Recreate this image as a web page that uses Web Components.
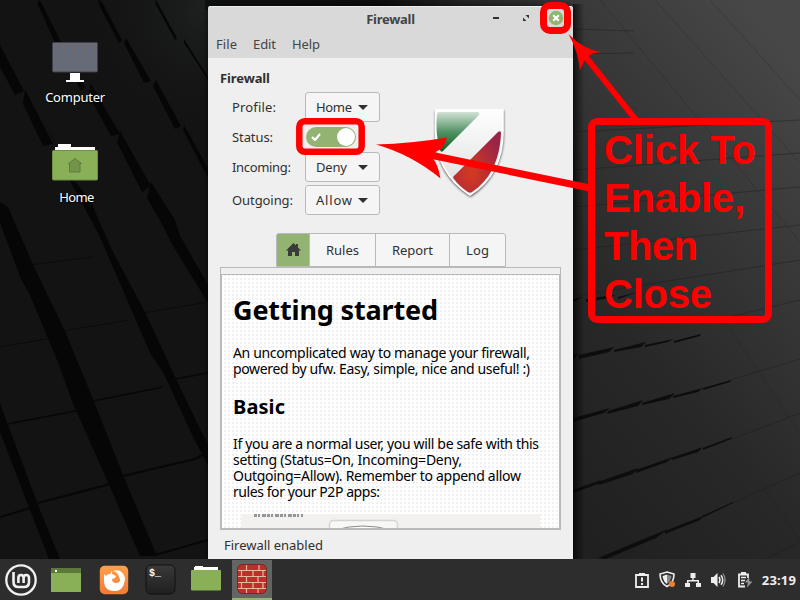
<!DOCTYPE html>
<html lang="en">
<head>
<meta charset="utf-8">
<title>Firewall</title>
<style>
html,body{margin:0;width:800px;height:600px;overflow:hidden;background:#151515;font-family:"Noto Sans","Open Sans",sans-serif}
</style>
</head>
<body>
<mint-desktop></mint-desktop>
<script>
function define(name, markup, setup) {
  const t = document.createElement('template');
  t.innerHTML = markup;
  customElements.define(name, class extends HTMLElement {
    connectedCallback() {
      if (this.shadowRoot) return;
      const r = this.attachShadow({ mode: 'open' });
      r.append(t.content.cloneNode(true));
      if (setup) setup.call(this, r);
    }
  });
}

/* A single line of text whose tracking is tuned to a given width. */
define('text-line', `<style>
:host{display:block;white-space:nowrap;line-height:16px}
span{display:inline-block}
</style><span><slot></slot></span>`, function (r) {
  const s = r.querySelector('span'), w = +this.getAttribute('w');
  if (w) {
    const n = this.textContent.length;
    s.style.letterSpacing = ((w - s.getBoundingClientRect().width) / (n - 1)) + 'px';
  }
});

define('wall-paper', `<style>:host{display:block;position:absolute;inset:0}svg{display:block}</style>
<svg width="800" height="600" viewBox="0 0 800 600">
<defs>
<linearGradient id="r" x1="0.75" y1="0" x2="0.3" y2="1"><stop offset="0" stop-color="#474747"/><stop offset=".3" stop-color="#383838"/><stop offset=".65" stop-color="#282828"/><stop offset="1" stop-color="#202020"/></linearGradient>
<linearGradient id="t" x1="0" x2="1"><stop offset="0" stop-color="#101211"/><stop offset=".45" stop-color="#0d0d0d"/><stop offset=".7" stop-color="#242424"/><stop offset="1" stop-color="#383838"/></linearGradient>
<linearGradient id="s" x1="0" x2="1"><stop offset="0" stop-color="#000" stop-opacity=".55"/><stop offset="1" stop-color="#000" stop-opacity="0"/></linearGradient>
<radialGradient id="c"><stop offset="0" stop-color="#1e2120"/><stop offset="1" stop-color="#131313" stop-opacity="0"/></radialGradient>
</defs>
<rect width="800" height="600" fill="#131313"/>
<ellipse cx="205" cy="10" rx="130" ry="130" fill="url(#c)"/>
<rect x="205" width="370" height="10" fill="url(#t)"/>
<rect x="570" width="230" height="600" fill="url(#r)"/>
<g fill="#060606">
<path d="M38 0l3 2 20 40-5 3-18-40zM59 42l26 45-4 4-24-46zM91 84l29 50-9 2-23-42zM120 131l31 55-9 6-25-50zM151 182l24 38 5 16 30 52v18l-37-60-10-20-16-28z"/>
<path d="M98 0l4 2 20 38-3 3-20-38zM126 38l25 43-7 2-20-40zM156 80l25 46-6 3-22-43zM184 125l24 43v10l-25-48z"/>
<path d="M156 0l21 38-2 2-20-37zM184 39l24 38v3l-24-37z"/>
<path d="M0 45l24 46-9 4-15-28zM25 89l28 55-10 2-20-42zM53 139l20 40 17 21 21 48 35 66 30 65 28 58 6 10v22l-16-30-31-67-12-17-52-120-32-60-18-48z"/>
<path d="M0 202l8 5 27 62 30 62 28 68 30 76 34 81h-17l-33-76-33-74-17-46-28-67-8-14-21-56z"/>
<path d="M0 403l8 22 32 85 20 49H49L30 510 0 432z"/>
</g>
<g stroke="#070707" fill="none">
<path d="M30 265l63-8M0 347l52-9M63 331l67-11M138 314l70-12" stroke-width=".7"/>
<path d="M8 424l77-15M93 401l70-14M170 380l38-7" stroke-width="1.5"/>
<path d="M0 517l37-11M38 503l80-21M123 476l72-17 13-7M155 555l53-15" stroke-width="2"/>
</g>
<g stroke="#1c1c1c" stroke-width=".8" fill="none">
<path d="M574 29l60 2M574 54l60-1M574 132l226-12M574 170l226-17M574 207l226-20M574 250l226-25M574 296l226-36M700 324l100-24M730 380l70-21M730 440l70-27M730 504l70-31M765 559l35-17" stroke-opacity=".55"/>
<path d="M600 0l200 242M655 0l145 163M710 0l90 100M730 329l70 105M765 490l35 50" stroke-opacity=".3"/>
</g>
<g fill="#0d0d0d">
<path d="M573 355l6-2-5 5-1 1zM579 355l35-8-5 5-30 7zM614 350l32-8-5 5-27 5zM645 345l29-6-6 3-23 5zM674 341l27-7-1 2-26 7z"/>
<path d="M573 418l37-10-6 5-31 9zM608 411l35-11-5 6-31 8zM642 403l33-10-6 6-27 6zM673 396l30-8-5 4-25 6zM703 388l28-8-1 2-27 8z"/>
<path d="M573 490l28-10-3 4-25 9zM598 482l40-14-5 6-34 11zM636 470l37-13-6 5-31 11zM671 458l32-11-5 5-26 8zM703 448l29-11-1 2-28 11zM598 558l70-29-12 9-50 21zM665 531l38-15-3 4-35 14zM702 516l31-14v1l-31 15z"/>
<path d="M573 299l10-2-10 5zM586 299l29-4-5 3-24 4zM618 297l20-5-20 7z"/>
</g>
<rect x="573" y="4" width="12" height="560" fill="url(#s)"/>
</svg>`);

define('desktop-icon', `<style>
:host{position:absolute;width:100px;display:flex;flex-direction:column;align-items:center;color:#fff;font-size:13px;text-shadow:1px 1px 1px #000}
</style><slot name="icon"></slot><slot></slot>`);

define('drop-down', `<style>
:host{box-sizing:border-box;width:75px;height:30px;border:1px solid #b9b9b9;border-radius:3px;background:#f5f5f5;display:flex;align-items:center;justify-content:space-between;padding:0 11px 0 10px}
</style><slot></slot><svg width="10" height="5"><path d="M0 0h10L5 5z" fill="#303030"/></svg>`);

define('toggle-switch', `<style>
:host{width:50px;height:20px;border-radius:10px;background:#92b372;display:flex;align-items:center;justify-content:space-between;box-sizing:border-box;padding:0 1px 0 5px;margin-left:1px}
i{width:18px;height:18px;border-radius:9px;background:#fff}
</style><svg width="10" height="8"><path d="M1 4l3 3 5-6" fill="none" stroke="#fff" stroke-width="2.2"/></svg><i></i>`);

define('form-row', `<style>
:host{display:grid;grid-template-columns:73px auto;align-items:center;height:30px}
</style><slot></slot>`);

define('tab-strip', `<style>
:host{display:grid;grid-template-columns:32px 65px 73px 55px;gap:1px;width:230px;height:34px;box-sizing:border-box;border:1px solid #b9b9b9;background:#b9b9b9;border-radius:3px 3px 0 0;overflow:hidden;margin:18px 0 0 68px}
div{background:#f5f5f5;display:flex;align-items:center;justify-content:center}
.on{background:#92b372}
</style><div class="on"><svg width="15" height="14" viewBox="0 0 15 14"><path d="M7.5 0L0 7.5h2V13h4V9h3v4h4V7.500h2l-3-3V1h-2v1.500z" fill="#3a3a3a"/></svg></div>
<div><text-line w="33">Rules</text-line></div><div><text-line w="41">Report</text-line></div><div><text-line w="23">Log</text-line></div>`);

define('help-page', `<style>
:host{display:flex;flex-direction:column;width:341px;height:263px;box-sizing:border-box;border:1px solid #b9b9b9;margin-left:12px;color:#000;font-size:14px}
.in{margin-top:6px;flex:1;border:1px solid #b9b9b9;padding:0 0 0 11px;overflow:hidden;background:#fff radial-gradient(circle,#dedede 0 .6px,transparent .8px) 1px 2px/4px 4px}
h1,h2{margin:0;font-weight:bold}
h1{font-size:27px;padding-top:17px}h1 text-line{line-height:36px}
h2{font-size:20px;padding-top:14px}h2 text-line{line-height:32px}
.p{padding-top:13px}
svg{display:block;margin:14px 0 0 8px}
</style><div class="in">
<h1><text-line w="205">Getting started</text-line></h1>
<div class="p" style="padding-top:17px"><text-line w="297">An uncomplicated way to manage your firewall,</text-line><text-line w="297">powered by ufw. Easy, simple, nice and useful! :)</text-line></div>
<h2><text-line w="52">Basic</text-line></h2>
<div class="p"><text-line w="306">If you are a normal user, you will be safe with this</text-line><text-line w="229">setting (Status=On, Incoming=Deny,</text-line><text-line w="288">Outgoing=Allow). Remember to append allow</text-line><text-line w="147">rules for your P2P apps:</text-line></div>
<svg width="299" height="20"><rect width="299" height="20" fill="#f2f1f0"/><path d="M13 1.500h49" stroke="#777" stroke-width="3" stroke-dasharray="3 1 2 2 4 1" opacity=".75"/><rect x="88.500" y="6.500" width="68" height="20" rx="4" fill="#f8f8f7" stroke="#d5d4d2" stroke-width="1.500"/><path d="M94 16q28-8 56 0" fill="#fff" stroke="#888" stroke-width="1"/></svg>
</div>`);

define('shield-logo', `<style>:host{position:absolute;left:222px;top:98px}svg{display:block}</style>
<svg width="80" height="100" viewBox="430 104 80 100"><defs>
<linearGradient id="g" x1="0" y1="0" x2="0" y2="1"><stop offset="0" stop-color="#d2e2d5"/><stop offset=".5" stop-color="#519365"/><stop offset="1" stop-color="#08601c"/></linearGradient>
<radialGradient id="d" cx=".38" cy=".68" r=".7"><stop offset="0" stop-color="#d63a20"/><stop offset="1" stop-color="#992447"/></radialGradient>
<linearGradient id="w" x2="0" y2="1"><stop offset="0" stop-color="#fff"/><stop offset="1" stop-color="#dcdcdc"/></linearGradient>
<filter id="b" x="-20%" y="-20%" width="140%" height="140%"><feGaussianBlur stdDeviation="1.300"/></filter></defs>
<path d="M434.500 109.500h69v22c0 31-14 52-33.500 64.500-21-13-35.500-33-35.500-64.500z" transform="translate(.5 1)" fill="#555" filter="url(#b)"/>
<path d="M435.500 109.500h67.500v22c0 31-13 51-33 63.500C450 182 435.500 162 435.500 131z" fill="url(#w)" stroke="#fff" stroke-width="1.600"/>
<path d="M440 112h38q3 1 0 4l-35 35q-2 2-3-1-5-17-3-36 0-2 3-2z" fill="url(#g)"/>
<path d="M498 132q3-2 3 1c-1 28-12 48-29 59q-2 1-4 0-8-5-14-13-2-2 1-4z" fill="url(#d)"/></svg>`);

define('firewall-window', `<style>
:host{position:absolute;left:208px;top:6px;width:365px;height:553px;background:#efefef;border-radius:3px 3px 0 0;overflow:hidden;color:#303030;font-size:13px;box-shadow:0 0 7px #000a;display:flex;flex-direction:column}
header{height:52px;background:#d9d9d9;box-sizing:border-box;border-top:1px solid #eee;color:#444;flex:none}
.title{height:24px;display:grid;grid-template-columns:1fr auto 1fr;align-items:center;font-weight:bold}
.btns{display:flex;justify-content:flex-end;align-items:center;padding:0 9px 2px 0}
.menu{display:flex;gap:16px;padding:5px 0 0 8px}
.sec{font-weight:bold;padding:12px 0 6px 12px}
.form{padding-left:24px}
svg{display:block}
footer{padding:7px 0 0 16px}
</style>
<header><div class="title"><span></span><text-line w="49">Firewall</text-line><div class="btns">
<svg width="6" height="2" style="margin-right:24px"><path d="M0 1h6" stroke="#333" stroke-width="2"/></svg>
<svg width="6" height="6" style="margin-right:19px"><path d="M2.500 0H6v3.500zM0 2.500V6h3.500z" fill="#333"/></svg>
<svg width="16" height="16"><circle cx="8" cy="8" r="7.200" fill="#92b372"/><path d="M5.200 5.200l5.600 5.600M10.800 5.200l-5.600 5.600" stroke="#fff" stroke-width="2"/></svg></div></div>
<div class="menu"><text-line w="21">File</text-line><text-line w="23">Edit</text-line><text-line w="28">Help</text-line></div></header>
<div class="sec"><text-line w="50">Firewall</text-line></div>
<div class="form">
<form-row><text-line w="44">Profile:</text-line><drop-down><text-line w="36">Home</text-line></drop-down></form-row>
<form-row><text-line w="41">Status:</text-line><toggle-switch></toggle-switch></form-row>
<form-row><text-line w="59">Incoming:</text-line><drop-down><text-line w="31">Deny</text-line></drop-down></form-row>
<form-row style="margin-top:3px"><text-line w="61">Outgoing:</text-line><drop-down><text-line w="36">Allow</text-line></drop-down></form-row></div>
<tab-strip></tab-strip><help-page></help-page>
<footer><text-line w="99">Firewall enabled</text-line></footer>
<shield-logo></shield-logo>`);

define('callout-overlay', `<style>
:host{position:absolute;inset:0;color:red;font-family:"Liberation Sans",Arial,sans-serif;font-weight:bold;font-size:40px}
svg{display:block;position:absolute}
.box{position:absolute;left:588px;top:118px;width:184px;height:205px;box-sizing:border-box;border:7px solid red;border-radius:9px;padding:1px 0 0 9px}
text-line{line-height:48px}
</style><svg width="800" height="600" fill="none" stroke="red">
<rect x="543.500" y="5.500" width="24" height="25" rx="6.500" stroke-width="7"/>
<rect x="299.300" y="121.300" width="62.400" height="30.400" rx="5.500" stroke-width="6.500"/>
<path d="M585 56l51 64" stroke-width="6"/><path d="M430 155l160 33" stroke-width="7"/>
<path d="M568.500 34q14 15 32.500 18-10 1-13.500 5l-3 4q-2 4-4.500 9-2-19-11.500-36zM376 144.500q36-1 71-7-3 12-11 14l-3 7q5 6 7.500 20-29-24-64.500-34z" fill="red" stroke="none"/></svg>
<div class="box"><text-line w="152">Click To</text-line><text-line w="141">Enable,</text-line><text-line w="94">Then</text-line><text-line w="108">Close</text-line></div>`);

define('task-bar', `<style>
:host{position:absolute;left:0;right:0;bottom:0;height:41px;background:#2d2d2d;display:flex;align-items:center;justify-content:space-between;color:#eee;font-weight:bold;font-size:13px}
.apps{display:grid;grid-template-columns:42px 48px 48px 44px 48px 44px;height:41px}
.apps div{display:grid;place-items:center}
.apps .on{margin:1px 0 0 2px;background:#646464;border-bottom:2px solid #92b372;width:40px}
.tray{display:flex;align-items:center;padding-right:4px;gap:9px}svg{display:block}
</style><div class="apps">
<div><svg width="34" height="34" viewBox="0 0 34 34" fill="none" stroke="#f1f1f1"><circle cx="17" cy="17" r="14.700" stroke-width="2.300"/><path d="M9.500 9v10q0 5 5 5H20q5 0 5-5v-4q0-3-2.700-3t-2.700 3v5M19.600 15q0-3-2.600-3t-2.600 3v5" stroke-width="2.600"/></svg></div>
<div><svg width="30" height="24"><rect width="30" height="24" fill="#8ab057"/><rect width="30" height="5" fill="#5c793b"/><rect x="4" y="2" width="2" height="2" fill="#fff"/></svg></div>
<div><svg width="30" height="30" viewBox="0 0 30 30"><defs><linearGradient id="f" x2="0" y2="1"><stop stop-color="#ffa14c"/><stop offset="1" stop-color="#f37a35"/></linearGradient></defs><rect x=".8" y=".8" width="28.400" height="28.400" rx="5" fill="url(#f)"/><path d="M5 9l2 2q1-2 4-2l2-3v3l4 2q-1 3-4 3 0 4 4 4 3 0 4-2 0-5-4-9 7 2 8 8 0 11-10 11T5 15z" fill="#fff"/><path d="M14 6q9-3 12 7-1 13-11 13 8-3 8-10 0-8-9-10z" fill="#fff"/></svg></div>
<div><svg width="31" height="31" viewBox="0 0 31 31"><defs><linearGradient id="k" x2="0" y2="1"><stop stop-color="#393939"/><stop offset="1" stop-color="#202020"/></linearGradient></defs><rect x="1" y="1" width="29" height="29" rx="5" fill="url(#k)" stroke="#111"/><text x="4" y="11.500" font-family="Liberation Mono,monospace" font-size="10" font-weight="bold" fill="#fff">$_</text></svg></div>
<div><svg width="30" height="25" viewBox="0 0 30 25" style="margin-bottom:2px"><path d="M3 1.500V1h1V0h8v1h15v4H3z" fill="#fff"/><rect y="4" width="30" height="20.500" rx="1" fill="#8ab057"/></svg></div>
<div class="on"><svg width="30" height="30" viewBox="0 0 30 30"><rect x=".5" y=".5" width="29" height="29" rx="5" fill="#bd3029" stroke="#7c241f"/><path d="M1 6.500h28M1 12.500h28M1 18.500h28M1 24.500h28M9.500 1v5.500M22 1v5.500M4.500 7v5.500M16 7v5.500M26 7v5.500M9.500 13v5.500M21 13v5.500M4.500 19v5.500M16 19v5.500M26 19v5.500M9.500 25v4M21 25v4" stroke="#e9b5a1" stroke-width="1.200"/></svg></div></div>
<div class="tray">
<svg width="16" height="16" viewBox="0 0 16 16"><path d="M2 3h12v12H2z" fill="none" stroke="#eee" stroke-width="1.800"/><path d="M5 3V1h6v2z" fill="#eee"/><path d="M8 5.500v4M8 11v2" stroke="#eee" stroke-width="2"/></svg>
<svg width="17" height="17" viewBox="0 0 17 17"><path d="M8 1l7 2q0 9-7 12.500Q1 12 1 3z" fill="none" stroke="#eee" stroke-width="1.600"/><path d="M8 3.500V13Q4 10 3.500 5z" fill="#eee"/><path d="M8 3.500V13q4-3 4.500-8z" fill="#888"/><circle cx="13" cy="13" r="3" fill="#ef7f32"/></svg>
<svg width="16" height="16" viewBox="0 0 16 16" fill="#eee"><path d="M5.500 1h5v5H8.700v2H14v3h2v4h-5v-4h1.500V9.500h-9V11H5v4H0v-4h2V8h5.300V6H5.500z"/></svg>
<svg width="16" height="16" viewBox="0 0 16 16"><path d="M1 5h2.500L7.500 1v14l-4-4H1z" fill="#eee"/><path d="M9 5q2 3 0 6M11 3.200q3.500 4.800 0 9.600" fill="none" stroke="#eee" stroke-width="1.500"/><path d="M13 1.500q4 6.500 0 13" fill="none" stroke="#888" stroke-width="1.400"/></svg>
<svg width="18" height="17" viewBox="0 0 18 17"><path d="M10 15.500H4v-12h9V7" fill="none" stroke="#eee" stroke-width="1.800"/><path d="M6 1h5v3H6z" fill="#eee"/><path d="M6 6.500h5M6 9.500h4M6 12.500h3" stroke="#eee" stroke-width="1.600"/><path d="M14 6l-4 5.500h3l-1 5 5.500-6h-3z" fill="#999"/></svg>
<text-line w="34">23:19</text-line></div>`);

define('mint-desktop', `<style>:host{display:block;position:relative;width:800px;height:600px;overflow:hidden}svg{display:block}</style>
<wall-paper></wall-paper>
<desktop-icon style="left:25px;top:42px"><svg slot="icon" width="46" height="41" viewBox="0 0 46 41"><defs><pattern id="p" width="5" height="6" patternUnits="userSpaceOnUse"><path d="M1 1h1v1H1zM3 4h1v1H3z" fill="#4d6da3"/></pattern></defs><rect x=".5" y=".5" width="45" height="29.500" rx="1" fill="#686a74" stroke="#3c3f4c"/><rect x="5" y="5" width="37" height="22" fill="url(#p)"/><path d="M18 31h10v7h4v2H14v-2h4z" fill="#fff"/></svg><text-line w="60" style="margin-top:6px">Computer</text-line></desktop-icon>
<desktop-icon style="left:25px;top:144px"><svg slot="icon" width="46" height="37" viewBox="0 0 46 37"><path d="M3 3h3V0h13v3h24v6H3z" fill="#fff"/><rect x=".5" y="6.500" width="45" height="29.500" rx="1" fill="#8ab057" stroke="#6f8e46"/><path d="M16.500 19.500l6.500-5 6.500 5h-1.500V28H17.500v-8.500z" fill="#739349" stroke="#5f7b3c"/></svg><text-line w="35" style="margin:8px 0 0 3px">Home</text-line></desktop-icon>
<firewall-window></firewall-window><task-bar></task-bar><callout-overlay></callout-overlay>`);
</script>
</body>
</html>
